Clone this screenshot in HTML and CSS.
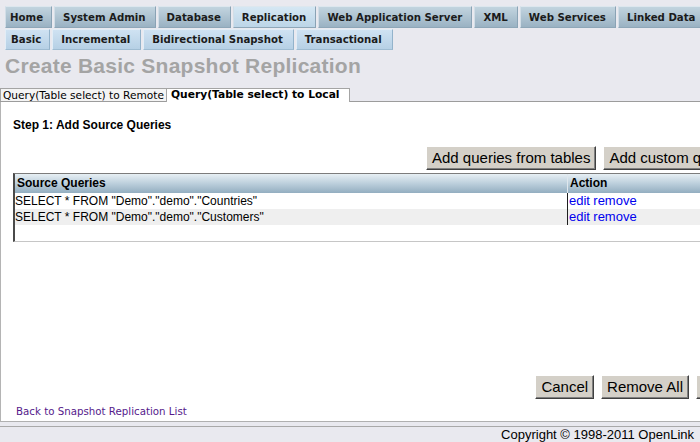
FILE: index.html
```html
<!DOCTYPE html>
<html>
<head>
<meta charset="utf-8">
<title>Create Basic Snapshot Replication</title>
<link rel="stylesheet" href="styles.css">
</head>
<body>
<div class="page">
  <div class="tabs">
    <span class="tab first">Home</span>
    <span class="tab">System Admin</span>
    <span class="tab">Database</span>
    <span class="tab active">Replication</span>
    <span class="tab">Web Application Server</span>
    <span class="tab">XML</span>
    <span class="tab">Web Services</span>
    <span class="tab">Linked Data</span>
  </div>
  <div class="subtabs">
    <span class="subtab first">Basic</span>
    <span class="subtab">Incremental</span>
    <span class="subtab">Bidirectional Snapshot</span>
    <span class="subtab">Transactional</span>
  </div>
  <h1 class="title">Create Basic Snapshot Replication</h1>
  <div class="qtabs">
    <span class="qtab">Query(Table select) to Remote</span>
    <span class="qtab active">Query(Table select) to Local</span>
  </div>
  <div class="panel">
    <div class="step">Step 1: Add Source Queries</div>
    <div class="btnrow top">
      <button class="btn">Add queries from tables</button>
      <button class="btn">Add custom queries</button>
    </div>
    <div class="grid">
      <div class="row head">
        <div class="c1">Source Queries</div>
        <div class="c2">Action</div>
      </div>
      <div class="row">
        <div class="c1">SELECT * FROM "Demo"."demo"."Countries"</div>
        <div class="c2"><a href="#" class="act">edit</a> <a href="#" class="act">remove</a></div>
      </div>
      <div class="row alt">
        <div class="c1">SELECT * FROM "Demo"."demo"."Customers"</div>
        <div class="c2"><a href="#" class="act">edit</a> <a href="#" class="act">remove</a></div>
      </div>
    </div>
    <div class="btnrow bottom">
      <button class="btn">Cancel</button>
      <button class="btn">Remove All</button>
      <button class="btn">Finish</button>
    </div>
    <a href="#" class="back">Back to Snapshot Replication List</a>
  </div>
</div>
<div class="footer">Copyright © 1998-2011 OpenLink</div>
</body>
</html>
```
FILE: styles.css
```css
html {
  overflow: hidden;
}
body {
  margin: 0;
  background: #e9e9ef;
  font-family: "Liberation Sans", Arial, sans-serif;
  color: #000;
}
.page {
  width: 760px;
  padding-top: 6px;
}
.tabs {
  display: flex;
  gap: 2px;
  margin-left: 5px;
  height: 22px;
}
.tab {
  flex: none;
  box-sizing: border-box;
  height: 22px;
  font: bold 10.2px/19px "DejaVu Sans", Verdana, sans-serif;
  color: #1b1b1b;
  white-space: nowrap;
  padding: 1px 9px 0 8px;
  background: linear-gradient(#c2d4df, #9ab2c3);
  border-top: 1px solid #dde7ee;
  border-left: 1px solid #d2dee7;
  border-right: 1px solid #8aa3b5;
  border-bottom: 1px solid #8ea7b8;
}
.tab.first {
  padding: 1px 8px 0 4px;
}
.tab.active {
  background: linear-gradient(#d5e7f3, #bcd5e7);
}
.subtabs {
  display: flex;
  gap: 2px;
  margin: 1px 0 0 5px;
  height: 21px;
}
.subtab {
  flex: none;
  box-sizing: border-box;
  height: 21px;
  font: bold 10.2px/19px "DejaVu Sans", Verdana, sans-serif;
  color: #1b1b1b;
  white-space: nowrap;
  padding: 0 10px 0 8px;
  background: linear-gradient(#cfe2f2, #b6d0e5);
  border: 1px solid;
  border-color: #e2edf6 #93b3cb #9fbcd2 #e2edf6;
}
.subtab.first {
  padding: 0 8px 0 5px;
}
.title {
  margin: 4px 0 0 0;
  padding-left: 5px;
  font: bold 21px/24px "Liberation Sans", Arial, sans-serif;
  letter-spacing: 0.25px;
  color: #a4a4a4;
  white-space: nowrap;
}
.qtabs {
  display: flex;
  margin-top: 10px;
  height: 13px;
  border-bottom: 1px solid #9c9c9c;
}
.qtab {
  flex: none;
  box-sizing: border-box;
  height: 13px;
  font: 10.6px/12px "DejaVu Sans", Verdana, sans-serif;
  white-space: nowrap;
  padding: 0 3px 0 2px;
  background: #f4f4f4;
  border: 1px solid #a4a4a4;
  border-bottom: none;
}
.qtab.active {
  height: 14px;
  font-weight: bold;
  font-size: 10.7px;
  background: #fff;
  padding: 0 9px 0 4px;
  margin-left: -2px;
}
.panel {
  background: #fff;
  border-left: 1px solid #b4b4b4;
  border-bottom: 1px solid #b0b0b0;
  padding: 16px 0 3px 0;
}
.step {
  padding-left: 12px;
  font: bold 12px/14px "Liberation Sans", Arial, sans-serif;
}
.btnrow {
  display: flex;
  justify-content: flex-end;
  gap: 7px;
  padding-right: 12px;
}
.btnrow.top {
  margin-top: 14px;
}
.btnrow.bottom {
  margin-top: 133px;
}
.btn {
  box-sizing: border-box;
  height: 24px;
  margin: 0;
  padding: 0 5px;
  font: 15px/22px "Liberation Sans", Arial, sans-serif;
  color: #000;
  white-space: nowrap;
  background: #d4d0c8;
  border: 1px solid;
  border-color: #fff #404040 #404040 #fff;
  box-shadow: inset -1px -1px #808080;
}
.grid {
  margin: 3px 12px 0 12px;
  border-top: 1px solid #7c7c7c;
  border-left: 2px solid #4a4a4a;
  border-bottom: 1px solid #c6c6c6;
  padding-bottom: 16px;
}
.row {
  display: flex;
  height: 16px;
  font: 12px/16px "Liberation Sans", Arial, sans-serif;
  white-space: nowrap;
}
.row.head {
  height: 19px;
  line-height: 19px;
  font-weight: bold;
  background: linear-gradient(#e7eff4, #bccfdc 50%, #93aec0);
}
.row.alt {
  background: #efefef;
}
.c1 {
  flex: 0 0 553px;
  box-sizing: border-box;
  border-right: 1px solid #1e1e1e;
  overflow: hidden;
}
.head .c1 {
  padding-left: 2px;
  border-right-color: #dfe7ed;
}
.c2 {
  padding-left: 1px;
}
.head .c2 {
  padding-left: 2px;
}
.act {
  font-size: 13px;
  color: #0000ee;
  text-decoration: none;
}
.back {
  display: block;
  margin: 6px 0 0 15px;
  font: 10.25px/13px "DejaVu Sans", Verdana, sans-serif;
  color: #551a8b;
  text-decoration: none;
  white-space: nowrap;
}
.footer {
  margin-top: 4px;
  border-top: 1px solid #a9a9a9;
  font: 13px/15px "Liberation Sans", Arial, sans-serif;
  text-align: right;
  padding-right: 6px;
  white-space: nowrap;
}
```
